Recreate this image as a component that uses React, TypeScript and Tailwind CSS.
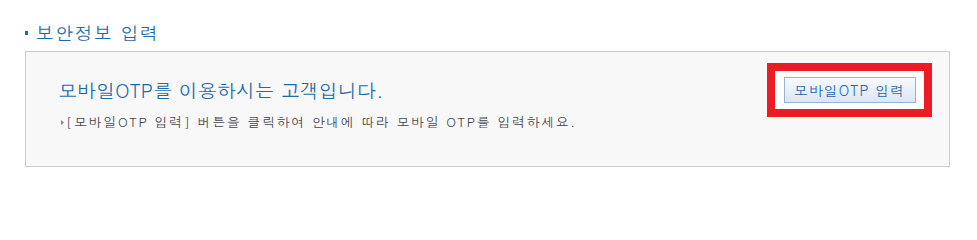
export default function App() {
  return (
    <div className="w-[977px] h-[201px] bg-white pl-[25px] pr-[27px] pt-[22px] font-['Dotum','Noto_Sans_CJK_KR','Liberation_Sans',sans-serif]">
      <h3 className="flex items-center gap-[8px] text-[18px] leading-[22px] text-[#1b6cad] font-medium tracking-[1.3px]">
        <span className="block w-[3px] h-[4px] bg-[#1b6cad]" />
        보안정보 입력
      </h3>
      <div className="mt-[7px] h-[116px] border border-[#cccccc] bg-[#f8f8f8] flex justify-between">
        <div className="pl-[32px] pt-[26px]">
          <p className="text-[19px] leading-[24px] text-[#1b6cad] tracking-[0.1px]">
            모바일OTP를 이용하시는 고객입니다.
          </p>
          <p className="mt-[11px] ml-[3px] flex items-center text-[13px] leading-[18px] text-[#45454f] tracking-[1.6px]">
            <svg width="3" height="5" viewBox="0 0 3 5" className="mr-[2px]">
              <path d="M0 0 L3 2.5 L0 5 Z" fill="#888" />
            </svg>
            [모바일OTP 입력] 버튼을 클릭하여 안내에 따라 모바일 OTP를 입력하세요.
          </p>
        </div>
        <div className="pt-[11px] pr-[17px]">
          <div className="w-[165px] h-[54px] border-8 border-[#ed1c24] bg-white flex items-center justify-center">
            <button className="w-[132px] h-[26px] border border-[#93b4dc] bg-gradient-to-b from-[#f8fbff] to-[#dbe5f3] text-[14px] leading-[24px] text-[#2563ae] tracking-[1px] cursor-pointer">
              모바일OTP 입력
            </button>
          </div>
        </div>
      </div>
    </div>
  );
}
